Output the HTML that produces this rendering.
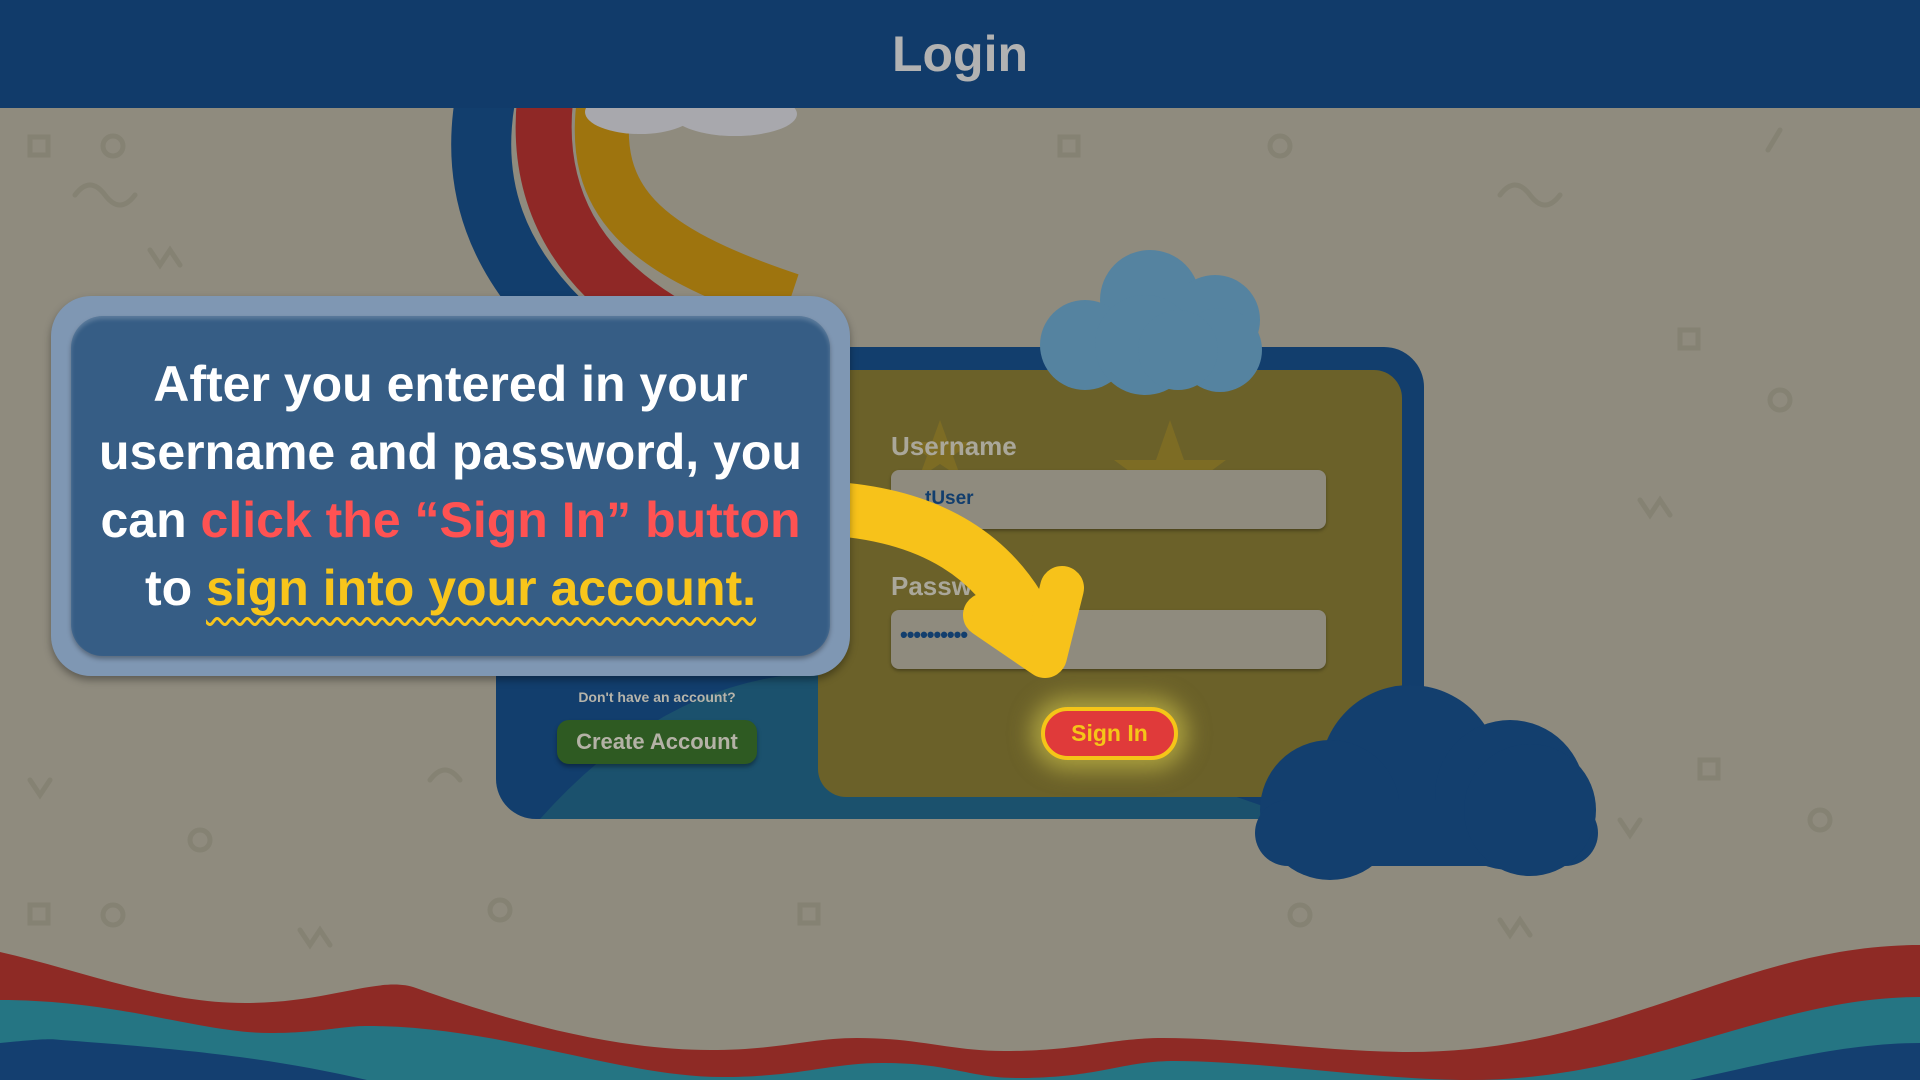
<!DOCTYPE html>
<html><head><meta charset="utf-8">
<style>
*{margin:0;padding:0;box-sizing:border-box}
body{width:1920px;height:1080px;overflow:hidden;background:#8f8b7e;position:relative;font-family:"Liberation Sans","DejaVu Sans",sans-serif}
.hdr{position:absolute;left:0;top:0;width:1920px;height:108px;background:#113b6a;text-align:center;color:#b2b2b2;font-weight:bold;font-size:50px;line-height:108px}
svg{position:absolute;left:0;top:0}
.abs{position:absolute}
.lbl{color:#aaa79a;font-weight:bold;font-size:26px}
.inp{background:#8f8b7e;border-radius:8px;box-shadow:0 2px 3px rgba(0,0,0,.3)}
.co{position:absolute;left:51px;top:296px;width:799px;height:380px;background:#7f97b3;border-radius:40px;box-shadow:0 4px 8px rgba(0,0,0,.35)}
.ci{position:absolute;left:71px;top:316px;width:759px;height:340px;background:#365d85;border-radius:32px;box-shadow:inset 0 3px 4px rgba(255,255,255,.2),0 3px 5px rgba(0,0,0,.3)}
.txt{position:absolute;left:51px;top:350px;width:799px;text-align:center;color:#fff;font-weight:bold;font-size:50px;line-height:68px;white-space:nowrap}
.r{color:#ff5252}.y{color:#f8c51b;text-decoration:underline wavy #f8c51b;text-decoration-thickness:3px;text-underline-offset:12px}
</style></head><body>
<svg width="1920" height="1080" viewBox="0 0 1920 1080">
<g fill="none" stroke="#858273" stroke-width="5" stroke-linecap="round">
<rect x="30" y="137" width="18" height="18"/><circle cx="113" cy="146" r="10"/><path d="M75 195q15-20 30 0t30 0"/><path d="M150 250l10 15 10-15 10 15"/><rect x="1060" y="137" width="18" height="18"/><circle cx="1280" cy="146" r="10"/><path d="M1500 195q15-20 30 0t30 0"/><rect x="1680" y="330" width="18" height="18"/><circle cx="1780" cy="400" r="10"/><path d="M1640 500l10 15 10-15 10 15"/><rect x="30" y="905" width="18" height="18"/><circle cx="113" cy="915" r="10"/><path d="M300 930l10 15 10-15 10 15"/><circle cx="500" cy="910" r="10"/><rect x="800" y="905" width="18" height="18"/><circle cx="1300" cy="915" r="10"/><path d="M1500 920l10 15 10-15 10 15"/><path d="M1780 130l-12 20"/><rect x="1700" y="760" width="18" height="18"/><circle cx="1820" cy="820" r="10"/><path d="M30 780l10 15 10-15"/><circle cx="200" cy="840" r="10"/><path d="M430 780q15-20 30 0"/><circle cx="1500" cy="760" r="10"/><path d="M1620 820l10 15 10-15"/>
</g>
<g fill="none" stroke-linecap="butt">
<path d="M485 100 C470 190 500 260 560 320" stroke="#123e6d" stroke-width="60"/>
<path d="M545 100 C535 200 580 270 660 320" stroke="#8f2826" stroke-width="56"/>
<path d="M604 100 C590 200 640 250 790 300" stroke="#9e740e" stroke-width="54"/>
</g>
<ellipse cx="640" cy="112" rx="55" ry="22" fill="#a8a8ad"/><ellipse cx="735" cy="114" rx="62" ry="22" fill="#a8a8ad"/>
<rect x="0" y="0" width="1920" height="108" fill="#113b6a"/>
<rect x="496" y="347" width="928" height="472" rx="40" fill="#123e6d"/>
<path d="M540 819 Q700 640 900 680 L1300 819Z" fill="#1f5a6e" opacity=".7"/>
<rect x="818" y="370" width="584" height="427" rx="28" fill="#6b6129"/>
<path d="M1170 420l14 40 42 0-34 25 14 40-36-25-36 25 14-40-34-25 42 0z" fill="#7d6c24"/>
<path d="M940 420l8 22 24 0-19 14 8 22-21-14-21 14 8-22-19-14 24 0z" fill="#7d6c24"/>
<g fill="#5583a0"><circle cx="1150" cy="300" r="50"/><circle cx="1215" cy="320" r="45"/><circle cx="1085" cy="345" r="45"/><circle cx="1145" cy="345" r="50"/><circle cx="1220" cy="350" r="42"/><circle cx="1178" cy="350" r="40"/></g>
<g fill="#133f6e"><circle cx="1410" cy="775" r="90"/><circle cx="1510" cy="795" r="75"/><circle cx="1330" cy="810" r="70"/><rect x="1255" y="800" width="343" height="66" rx="33"/><circle cx="1530" cy="810" r="66"/></g>
<path d="M0 952 C80 970 160 1003 245 1003 C330 1003 380 975 416 988 C520 1025 620 1050 710 1050 C780 1050 810 1038 857 1038 C920 1038 950 1051 1004 1051 C1080 1051 1110 1038 1163 1038 C1240 1038 1330 1052 1408 1052 C1620 1052 1740 945 1920 945 L1920 1080 L0 1080Z" fill="#8e2a25"/>
<path d="M0 1000 C120 1000 200 1033 270 1033 C320 1033 340 1026 367 1026 C500 1026 620 1077 722 1077 C800 1077 830 1063 882 1063 C950 1063 970 1078 1016 1078 C1100 1078 1120 1061 1175 1061 C1260 1061 1380 1080 1469 1080 C1650 1080 1770 997 1920 997 L1920 1080 L0 1080Z" fill="#257583"/>
<path d="M0 1043 C30 1040 50 1038 61 1040 C200 1050 280 1060 367 1080 L0 1080Z M1690 1080 C1780 1060 1850 1043 1920 1043 L1920 1080Z" fill="#143f70"/>
</svg>
<div class="hdr">Login</div>
<div class="abs lbl" style="left:891px;top:431px">Username</div>
<div class="abs inp" style="left:891px;top:470px;width:435px;height:59px"></div>
<div class="abs" style="left:925px;top:488px;color:#123e6d;font-weight:bold;font-size:19px">tUser</div>
<div class="abs lbl" style="left:891px;top:571px">Password</div>
<div class="abs inp" style="left:891px;top:610px;width:435px;height:59px"></div>
<div class="abs" style="left:900px;top:622px;color:#123e6d;font-weight:bold;font-size:22px;letter-spacing:-1px">••••••••••</div>
<div class="abs" style="left:1041px;top:707px;width:137px;height:53px;border-radius:27px;background:#e03a3a;border:4px solid #f5c518;box-shadow:0 0 22px 10px rgba(220,210,80,.55);color:#f5c518;font-weight:bold;font-size:23px;text-align:center;line-height:45px">Sign In</div>
<div class="abs" style="left:556px;top:689px;width:202px;text-align:center;color:#b6b4aa;font-weight:bold;font-size:14px">Don't have an account?</div>
<div class="abs" style="left:557px;top:720px;width:200px;height:44px;border-radius:12px;background:#2e5a22;box-shadow:0 3px 4px rgba(0,0,0,.35);color:#b4b2a6;font-weight:bold;font-size:22px;text-align:center;line-height:44px">Create Account</div>
<svg width="1920" height="1080" viewBox="0 0 1920 1080">
<g fill="none" stroke="#f7c21a" stroke-linecap="round" stroke-linejoin="round">
<path d="M820 508 Q985 515 1035 640" stroke-width="54"/>
<path d="M985 615 L1045 656 L1062 588" stroke-width="44"/>
</g>
</svg>
<div class="co"></div>
<div class="ci"></div>
<div class="txt">After you entered in your<br>username and password, you<br>can <span class="r">click the “Sign In” button</span><br>to <span class="y">sign into your account.</span></div>
</body></html>
